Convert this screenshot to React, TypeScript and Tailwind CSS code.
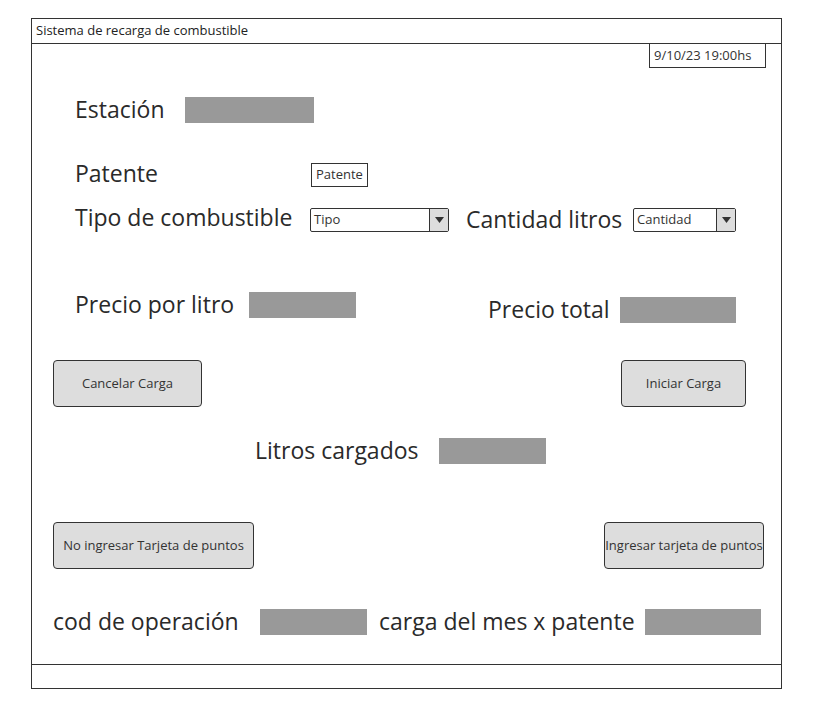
import React from 'react'

const font = { fontFamily: '"Open Sans", Lato, sans-serif' }

const big = 'text-[23px] leading-[26px] text-[#2a2a2a] font-medium whitespace-nowrap'

function GrayBox({ w }: { w: string }) {
  return <div className={`${w} h-[26px] bg-[#999999] shrink-0`} />
}

function Select({ label, w }: { label: string; w: string }) {
  return (
    <div className={`${w} h-[24px] border border-[#333] rounded-[2px] flex shrink-0 bg-white`}>
      <div className="flex-1 pl-[3px] flex items-center text-[13px] text-[#333]">{label}</div>
      <div className="w-[19px] border-l border-[#333] bg-[#dddddd] flex items-center justify-center">
        <svg width="9" height="6" viewBox="0 0 9 6">
          <path d="M0 0 L9 0 L4.5 6 Z" fill="#333" />
        </svg>
      </div>
    </div>
  )
}

function Button({ label, w }: { label: string; w: string }) {
  return (
    <div
      className={`${w} h-[47px] bg-[#dddddd] border border-[#333] rounded-[4px] flex items-center justify-center text-[13px] text-[#333] shrink-0 whitespace-nowrap`}
    >
      {label}
    </div>
  )
}

export default function App() {
  return (
    <div className="w-[814px] h-[707px] bg-white pt-[18px] pl-[31px]" style={font}>
      <div className="w-[751px] h-[671px] border border-[#333] flex flex-col">
        {/* title bar */}
        <div className="h-[25px] border-b border-[#333] flex items-center pl-[4px] text-[13px] text-[#222]">
          Sistema de recarga de combustible
        </div>

        <div className="flex-1 flex flex-col">
          <div className="self-end mr-[15px] -mt-px w-[117px] h-[25px] border border-[#333] flex items-center pl-[4px] text-[13px] text-[#333]">
            9/10/23 19:00hs
          </div>

          {/* Estación */}
          <div className="mt-[29px] ml-[43px] flex items-center h-[26px]">
            <div className={`w-[110px] ${big} -mt-[3px]`}>Estación</div>
            <GrayBox w="w-[129px]" />
          </div>

          {/* Patente */}
          <div className="mt-[40px] ml-[43px] flex items-center h-[23px]">
            <div className={`w-[236px] ${big} -mt-[3px]`}>Patente</div>
            <div className="h-[24px] px-[4px] border border-[#333] flex items-center text-[13px] text-[#333]">
              Patente
            </div>
          </div>

          {/* Tipo / Cantidad */}
          <div className="mt-[22px] ml-[43px] flex items-center h-[24px]">
            <div className={`w-[235px] ${big} -mt-[6px]`}>Tipo de combustible</div>
            <Select label="Tipo" w="w-[139px]" />
            <div className={`ml-[17px] w-[167px] ${big} -mt-[3px]`}>Cantidad litros</div>
            <Select label="Cantidad" w="w-[103px]" />
          </div>

          {/* Precios */}
          <div className="mt-[60px] ml-[43px] mr-[45px] flex justify-between h-[31px]">
            <div className="flex items-center self-start">
              <div className={`w-[174px] ${big} -mt-[3px]`}>Precio por litro</div>
              <GrayBox w="w-[107px]" />
            </div>
            <div className="flex items-center self-end">
              <div className={`w-[132px] ${big} -mt-[3px]`}>Precio total</div>
              <GrayBox w="w-[116px]" />
            </div>
          </div>

          {/* Cancelar / Iniciar */}
          <div className="mt-[37px] ml-[21px] mr-[35px] flex justify-between">
            <Button label="Cancelar Carga" w="w-[149px]" />
            <Button label="Iniciar Carga" w="w-[125px]" />
          </div>

          {/* Litros cargados */}
          <div className="mt-[31px] ml-[223px] flex items-center h-[26px]">
            <div className={`w-[184px] ${big} -mt-[3px]`}>Litros cargados</div>
            <GrayBox w="w-[107px]" />
          </div>

          {/* Tarjeta */}
          <div className="mt-[58px] ml-[21px] mr-[17px] flex justify-between">
            <Button label="No ingresar Tarjeta de puntos" w="w-[201px]" />
            <Button label="Ingresar tarjeta de puntos" w="w-[160px]" />
          </div>

          {/* cod / carga */}
          <div className="mt-[40px] ml-[21px] flex items-center h-[26px]">
            <div className={`w-[207px] ${big} -mt-[3px]`}>cod de operación</div>
            <GrayBox w="w-[107px]" />
            <div className={`ml-[12px] w-[266px] ${big} -mt-[3px]`}>carga del mes x patente</div>
            <GrayBox w="w-[116px]" />
          </div>
        </div>

        {/* footer */}
        <div className="h-[24px] border-t border-[#333]" />
      </div>
    </div>
  )
}
